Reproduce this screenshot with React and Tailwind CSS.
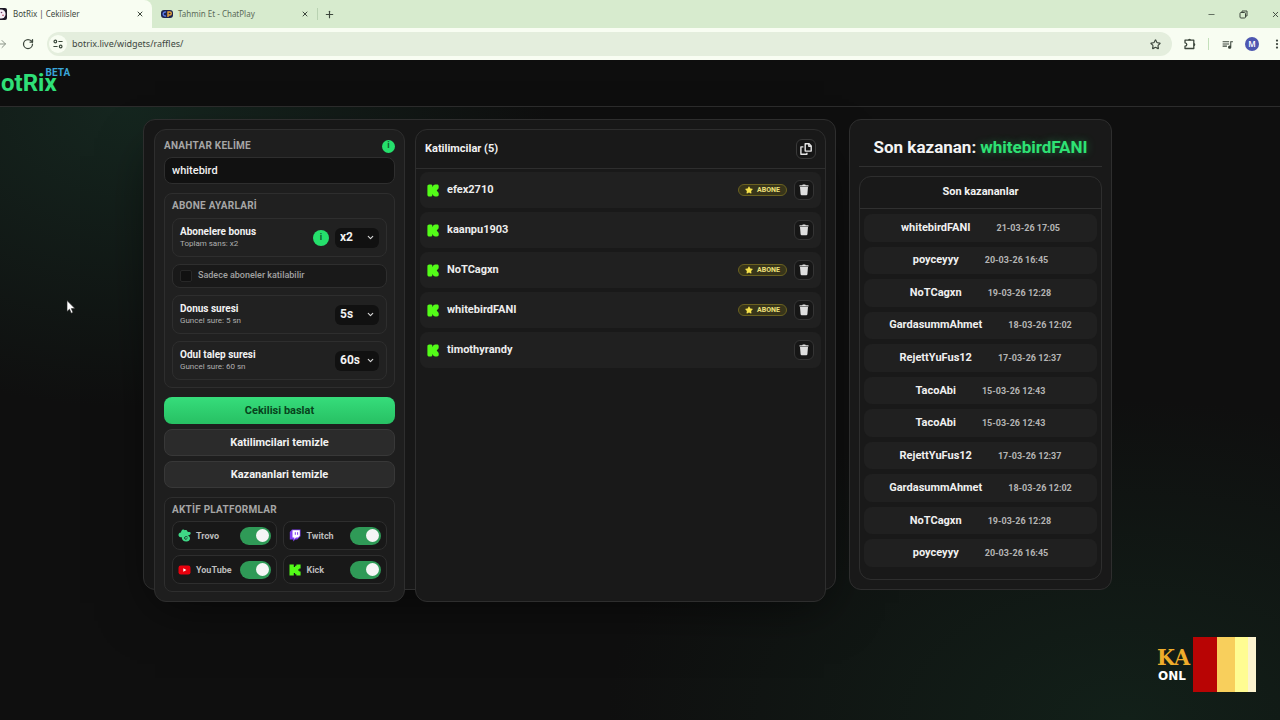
import { useState } from "react";
import { ChevronDown, Minus, X, Plus, RotateCw, ArrowRight, Star, MoreVertical } from "lucide-react";
import { FaStar } from "react-icons/fa";
import { MdQueueMusic } from "react-icons/md";

const participants = [
  { name: "efex2710", sub: true },
  { name: "kaanpu1903", sub: false },
  { name: "NoTCagxn", sub: true },
  { name: "whitebirdFANI", sub: true },
  { name: "timothyrandy", sub: false },
];

const winners = [
  ["whitebirdFANI", "21-03-26 17:05"],
  ["poyceyyy", "20-03-26 16:45"],
  ["NoTCagxn", "19-03-26 12:28"],
  ["GardasummAhmet", "18-03-26 12:02"],
  ["RejettYuFus12", "17-03-26 12:37"],
  ["TacoAbi", "15-03-26 12:43"],
  ["TacoAbi", "15-03-26 12:43"],
  ["RejettYuFus12", "17-03-26 12:37"],
  ["GardasummAhmet", "18-03-26 12:02"],
  ["NoTCagxn", "19-03-26 12:28"],
  ["poyceyyy", "20-03-26 16:45"],
];

const cardBorder = "border border-[#2e2e2e]";

function TabIconBotrix() {
  return (
    <svg viewBox="0 0 12 12" className="size-3 shrink-0" aria-hidden="true">
      <rect width="12" height="12" rx="2" fill="#1d1826" />
      <circle cx="6" cy="6" r="4.6" fill="#f4eef6" />
      <circle cx="6.5" cy="4.5" r="0.8" fill="#6b3a63" />
      <circle cx="8" cy="7.2" r="0.8" fill="#b23a55" />
    </svg>
  );
}

function TabIconChatPlay() {
  return (
    <svg viewBox="0 0 12 8" className="h-2 w-3 shrink-0" aria-hidden="true">
      <rect width="12" height="8" rx="3" fill="#1c2350" />
      <path d="M5 2.2A2 2 0 1 0 5 5.8" fill="none" stroke="#5b7be8" strokeWidth="1.4" />
      <path d="M7 7V2h1.8a1.5 1.5 0 0 1 0 3H7" fill="none" stroke="#e8a33b" strokeWidth="1.4" />
    </svg>
  );
}

function TuneIcon() {
  return (
    <svg viewBox="0 0 12 12" className="size-2.5" fill="none" stroke="#3c4a3c" strokeWidth="1.4" aria-hidden="true">
      <circle cx="2.8" cy="3" r="1.6" />
      <path d="M6.5 3h5M.5 9h5" />
      <circle cx="9.2" cy="9" r="1.6" />
    </svg>
  );
}

function PuzzleIcon() {
  return (
    <svg viewBox="0 0 14 14" className="size-3.5" aria-hidden="true">
      <path d="M2 3.2h8.8v8.3H2V9.2c1.1-.1 1.8-.8 1.800-1.700S3.100 5.900 2 5.800z" fill="none" stroke="#3c463c" strokeWidth="1.300" strokeLinejoin="round" />
      <path d="M5 3.300a1.500 1.500 0 0 1 3 0zM10.800 5.900a1.500 1.500 0 0 1 0 3z" fill="#3c463c" />
    </svg>
  );
}

function KickIcon({ className }) {
  return (
    <svg viewBox="0 0 12 12" className={className} aria-hidden="true">
      <path d="M.5.5h4.300v2.600h1.300V1.800h1.300V.5h4.200v3.900h-1.300v1.200H9v.8h1.300v1.200h1.300v3.900H7.400v-1.300H6.100V8.900H4.800v2.600H.5z" fill="#53fc18" />
    </svg>
  );
}

function KickSoftIcon() {
  return (
    <svg viewBox="0 0 12 13" className="h-3.25 w-3" aria-hidden="true">
      <path
        d="M2.300.5h1.500c1 0 1.600.6 1.600 1.500v.7h.4C6.200 1.300 7 .5 8.300.5H10c1.100 0 1.700.7 1.700 1.700v1.200c0 1.400-1.400 2-2 3.100.6 1.100 2 1.700 2 3.100v1.200c0 1-.6 1.700-1.700 1.700H8.300c-1.300 0-2.100-.8-2.500-2.200h-.4v.7c0 .9-.6 1.500-1.600 1.500H2.300C1.100 12.500.4 11.800.4 10.700V2.300C.4 1.200 1.100.5 2.300.5z"
        fill="#53fc18"
      />
    </svg>
  );
}

function TrovoIcon() {
  return (
    <svg viewBox="0 0 13 13" className="size-3.25 shrink-0" aria-hidden="true">
      <path
        d="M4.100 1.100c1-.8 2.100-.5 2.600.2.900-.6 2.300-.3 2.600.9.100.5.500.8 1.100.8h1.100c1.200 0 1.500 1 1 2-.5 1-1.600 1.500-2.800 1.400 1.600.6 2.500 1.700 2.300 3.200-.2 1.900-1.600 3-3.700 2.900-2.700-.1-4.400-1.600-4.700-4.600-.7.600-1.900.5-2.500-.3C.3 6.700.3 5.300 1.100 4.300c.5-.6 1.200-.8 1.900-.7.100-1 .4-1.900 1.100-2.500z"
        fill="#3fd886"
      />
      <path d="M9.600 8.200c-1.200-1.200-3.200-.6-3.100.9.100 1.400 2.300 1.600 2.500.3" fill="none" stroke="#17352a" strokeWidth="1" />
    </svg>
  );
}

function TwitchIcon() {
  return (
    <svg viewBox="0 0 12 13" className="h-3.25 w-3 shrink-0" aria-hidden="true">
      <path d="M3 .5h8.500v6.800L8.300 10.500H6.300L4.200 12.500V10.500H.8V3z" fill="#7d3cf0" />
      <path d="M3.500 1.200h7.300v5.600L9 8.600H7L5.300 10.300V8.600H3.500z" fill="#fff" />
      <path d="M6.300 3.200v2.600M8.600 3.200v2.600" stroke="#7d3cf0" strokeWidth="1" />
    </svg>
  );
}

function YouTubeIcon() {
  return (
    <svg viewBox="0 0 13 10" className="h-2.5 w-3.25 shrink-0" aria-hidden="true">
      <rect x=".5" y=".5" width="12" height="9" rx="2.300" fill="#e8000d" />
      <path d="M5.300 3.200v3.600L8.400 5z" fill="#fff" />
    </svg>
  );
}

function TrashIcon() {
  return (
    <svg viewBox="0 0 10 12" className="h-3 w-2.5" fill="#dedede" aria-hidden="true">
      <path d="M.5 1.300h2.700L3.800.5h2.400l.6.800h2.700v1.300h-9zM1 3.100h8l-.6 7.100c-.1.600-.5 1-1.100 1H2.700c-.6 0-1-.4-1.100-1z" />
    </svg>
  );
}

function CopyIcon() {
  return (
    <svg viewBox="0 0 12 12" className="size-3" fill="none" stroke="#e6e6e6" strokeWidth="1.400" strokeLinejoin="round" aria-hidden="true">
      <path d="M5.200.8h3.900l2.100 2.100v5.200h-6z" />
      <path d="M8.800.9v2.300h2.300M3.400 3.900H.9v7.300h6V9.800" />
    </svg>
  );
}

function SectionLabel({ children }) {
  return <h3 className="text-[10px] leading-3 font-bold tracking-wide text-[#a6a6a6]">{children}</h3>;
}

function Info({ label, className }) {
  return (
    <button type="button" aria-label={label} className={`flex shrink-0 items-center justify-center rounded-full bg-[#25e06c] font-bold text-[#0d5a2b] ${className}`}>
      i
    </button>
  );
}

function SelectBox({ id, value, options }) {
  return (
    <div className="flex shrink-0 items-center rounded-md bg-[#111111]">
      <select id={id} defaultValue={value} className="h-5 w-11 appearance-none bg-transparent pb-px pl-[5px] text-xs leading-[19px] font-bold text-[#f2f2f2]">
        {options.map((o) => (
          <option key={o}>{o}</option>
        ))}
      </select>
      <ChevronDown className="pointer-events-none -ml-[13px] mr-1 size-[9px] text-[#d8d8d8]" strokeWidth={3} />
    </div>
  );
}

function SettingRow({ id, title, hint, value, options, info }) {
  return (
    <div className={`flex h-[39px] items-center gap-1.5 rounded-lg bg-[#212121] px-[7px] ${cardBorder}`}>
      <div className="min-w-0 flex-1">
        <label htmlFor={id} className="block text-[10px] leading-[13px] font-bold text-[#f2f2f2]">{title}</label>
        <p className="text-[8px] leading-3 text-[#b0b0b0]">{hint}</p>
      </div>
      {info && <Info label="Bonus bilgisi" className="size-4 text-[9px]" />}
      <SelectBox id={id} value={value} options={options} />
    </div>
  );
}

function Platform({ icon, name }) {
  const [on, setOn] = useState(true);
  return (
    <label className={`flex h-[29px] items-center gap-[5px] rounded-lg bg-[#181818] px-[5px] ${cardBorder}`}>
      <span className="flex w-[13px] justify-center">{icon}</span>
      <span className="flex-1 text-[9px] leading-3 font-bold text-[#bcbcbc]">{name}</span>
      <input type="checkbox" checked={on} onChange={() => setOn(!on)} className="peer sr-only" />
      <span className="flex h-[18px] w-[31px] items-center rounded-full bg-[#555] px-0.5 peer-checked:justify-end peer-checked:bg-[#2f9a57]">
        <span className="size-[13px] rounded-full bg-[#f5f5f5]" />
      </span>
    </label>
  );
}

function Browser() {
  return (
    <header className="font-['Noto_Sans',sans-serif] text-[#3d473d]">
      <div className="flex h-7 bg-[#d7ebce]">
        <div className="flex w-[152px] items-center rounded-tr-lg bg-[#f8fdf2] pr-2">
          <div className="-ml-[5px] flex flex-1 items-center gap-1.5">
            <TabIconBotrix />
            <span className="text-[8px] leading-3">BotRix | Cekilisler</span>
          </div>
          <button type="button" aria-label="Sekmeyi kapat"><X className="size-2" strokeWidth={3} /></button>
        </div>
        <div className="my-2 flex w-[166px] items-center gap-[5px] border-r border-[#b9d2b2] pr-2 pl-[9px]">
          <TabIconChatPlay />
          <span className="flex-1 text-[8px] leading-3 text-[#5a6a58]">Tahmin Et - ChatPlay</span>
          <button type="button" aria-label="Sekmeyi kapat"><X className="size-2" strokeWidth={3} /></button>
        </div>
        <button type="button" aria-label="Yeni sekme" className="ml-1.5"><Plus className="size-[11px]" strokeWidth={2.5} /></button>
        <div className="ml-auto flex items-center gap-[23px]">
          <button type="button" aria-label="Simge durumuna küçült"><Minus className="size-[9px]" /></button>
          <button type="button" aria-label="Geri yükle">
            <svg viewBox="0 0 9 9" className="size-[9px]" fill="none" stroke="currentColor" aria-hidden="true">
              <rect x="1" y="2.500" width="5.500" height="5.500" rx="1" />
              <path d="M3 2.500V1h5v5H6.500" />
            </svg>
          </button>
          <button type="button" aria-label="Kapat"><X className="size-[9px]" strokeWidth={2.5} /></button>
        </div>
      </div>
      <div className="flex h-8 items-center bg-[#f8fdf2]">
        <button type="button" aria-label="İleri" className="-ml-1 text-[#8a9488]"><ArrowRight className="size-3" /></button>
        <button type="button" aria-label="Yenile" className="mr-[13px] ml-[14px]"><RotateCw className="size-3" strokeWidth={2.5} /></button>
        <div className="flex h-6 flex-1 items-center rounded-full bg-[#e4eedd] pr-[11px] pl-[2px]">
          <span className="flex size-[18px] items-center justify-center rounded-full bg-[#f8fdf2]"><TuneIcon /></span>
          <input aria-label="Adres" defaultValue="botrix.live/widgets/raffles/" className="ml-[5px] flex-1 bg-transparent text-[9px] leading-4 text-[#3d473d] outline-none" />
          <button type="button" aria-label="Yer işareti"><Star className="size-[11px]" strokeWidth={2.5} /></button>
        </div>
        <div className="-mr-[3px] flex items-center">
          <button type="button" aria-label="Uzantılar" className="ml-[11px]"><PuzzleIcon /></button>
          <span className="mr-3 ml-[11px] h-3 w-px bg-[#c4e0bb]" />
          <button type="button" aria-label="Medya"><MdQueueMusic className="size-[13px]" /></button>
          <button type="button" aria-label="Profil" className="ml-[11px] flex size-[14px] items-center justify-center rounded-full bg-[#4d57b0] text-[8px] font-semibold text-white">M</button>
          <button type="button" aria-label="Menü" className="ml-3"><MoreVertical className="size-3" strokeWidth={2.5} /></button>
        </div>
      </div>
    </header>
  );
}

function Controls() {
  return (
    <section className={`rounded-xl bg-[#1e1e1e] p-[9px] ${cardBorder}`}>
      <div className="mb-1 flex h-[14px] items-center justify-between">
        <label htmlFor="keyword" className="text-[10px] leading-3 font-bold tracking-wide text-[#a6a6a6]">ANAHTAR KELİME</label>
        <Info label="Anahtar kelime bilgisi" className="size-[13px] text-[9px]" />
      </div>
      <input id="keyword" defaultValue="whitebird" className={`h-[27px] w-full rounded-lg bg-[#111111] px-[7px] text-[11px] font-medium text-[#f2f2f2] ${cardBorder}`} />

      <div className={`mt-[9px] flex flex-col gap-[7px] rounded-lg bg-[#202020] px-[7px] pt-1.5 pb-[7px] ${cardBorder}`}>
        <div className="-mb-px"><SectionLabel>ABONE AYARLARİ</SectionLabel></div>
        <SettingRow id="bonus" title="Abonelere bonus" hint="Toplam sans: x2" value="x2" options={["x1", "x2", "x3"]} info />
        <label className={`flex h-6 items-center gap-1.5 rounded-lg bg-[#191919] px-[7px] text-[9px] font-medium text-[#a2a2a2] ${cardBorder}`}>
          <input type="checkbox" className="size-3 appearance-none rounded-xs border border-[#272727] bg-[#111111] checked:bg-[#25e06c]" />
          Sadece aboneler katilabilir
        </label>
        <SettingRow id="spin" title="Donus suresi" hint="Guncel sure: 5 sn" value="5s" options={["5s", "10s"]} />
        <SettingRow id="claim" title="Odul talep suresi" hint="Guncel sure: 60 sn" value="60s" options={["30s", "60s"]} />
      </div>

      <div className="mt-[9px] flex flex-col gap-[5px] text-[11px] leading-4 font-bold">
        <button type="button" className="h-[27px] rounded-lg bg-linear-to-b from-[#36dd7b] to-[#27c063] text-[#07431c]">Cekilisi baslat</button>
        <button type="button" className="h-[27px] rounded-lg border border-[#383838] bg-[#2b2b2b] text-[#f2f2f2]">Katilimcilari temizle</button>
        <button type="button" className="h-[27px] rounded-lg border border-[#383838] bg-[#2b2b2b] text-[#f2f2f2]">Kazananlari temizle</button>
      </div>

      <div className={`mt-[9px] rounded-lg bg-[#1c1c1c] px-[7px] pt-1.5 pb-[7px] ${cardBorder}`}>
        <SectionLabel>AKTİF PLATFORMLAR</SectionLabel>
        <div className="mt-[5px] grid grid-cols-2 gap-x-1.5 gap-y-[5px]">
          <Platform icon={<TrovoIcon />} name="Trovo" />
          <Platform icon={<TwitchIcon />} name="Twitch" />
          <Platform icon={<YouTubeIcon />} name="YouTube" />
          <Platform icon={<KickIcon className="size-3" />} name="Kick" />
        </div>
      </div>
    </section>
  );
}

function Participants() {
  return (
    <section className={`rounded-xl bg-[#191919] ${cardBorder}`}>
      <div className="flex h-[39px] items-center justify-between border-b border-[#2e2e2e] px-[9px]">
        <h2 className="text-[11px] font-bold text-[#f2f2f2]">Katilimcilar (5)</h2>
        <button type="button" aria-label="Kopyala" className="flex size-5 items-center justify-center rounded-md border border-[#3a3a3a] bg-[#161616]"><CopyIcon /></button>
      </div>
      <ul className="flex flex-col gap-1 px-1 pt-[3px]">
        {participants.map((p) => (
          <li key={p.name} className="flex h-9 items-center rounded-lg bg-[#202020] px-[7px]">
            <KickSoftIcon />
            <span className="ml-2 flex-1 text-[11px] leading-4 font-bold text-[#ededed]">{p.name}</span>
            {p.sub && (
              <span className="mr-[7px] flex h-3 w-[49px] items-center justify-center gap-1 rounded-full border border-[#6a6120] bg-[#38351a] text-[7px] leading-none font-bold text-[#eee07a]">
                <FaStar className="size-2 text-[#f4e14a]" />
                ABONE
              </span>
            )}
            <button type="button" aria-label={`Sil: ${p.name}`} className="flex size-5 items-center justify-center rounded-md border border-[#343434] bg-[#161616]"><TrashIcon /></button>
          </li>
        ))}
      </ul>
    </section>
  );
}

function Winners() {
  return (
    <aside className={`flex flex-col rounded-xl bg-[#191919] p-[9px] ${cardBorder}`}>
      <h2 className="flex h-[38px] items-center justify-center gap-1 border-b border-[#303030] text-[17px] font-bold text-[#f4f4f4]">
        Son kazanan: <span className="text-[#2ee274] [text-shadow:0_0_8px_#2ee27466]">whitebirdFANI</span>
      </h2>
      <section className={`mt-[9px] flex flex-1 flex-col rounded-xl ${cardBorder}`}>
        <h3 className="flex h-8 items-center justify-center border-b border-[#303030] text-[11px] font-bold text-[#f2f2f2]">Son kazananlar</h3>
        <ul className="flex flex-1 flex-col gap-[5px] px-1 pt-[5px] pb-3">
          {winners.map(([name, date], i) => (
            <li key={i} className="flex flex-1 items-center justify-center gap-[26px] rounded-lg bg-[#202020]">
              <span className="text-[11px] leading-4 font-bold text-[#f0f0f0]">{name}</span>
              <time className="text-[9px] leading-4 font-bold text-[#b4b4b4]">{date}</time>
            </li>
          ))}
        </ul>
      </section>
    </aside>
  );
}

function Watermark() {
  return (
    <div className="absolute right-6 bottom-7 flex h-[55px] items-stretch">
      <div className="flex w-9 flex-col pt-1.5">
        <span className="font-['DejaVu_Serif_Condensed','Liberation_Serif',serif] text-[23px] leading-7 font-bold text-[#efac2b]">KA</span>
        <span className="pl-px font-['DejaVu_Sans',sans-serif] text-xs leading-[10px] font-bold text-white">ONL</span>
      </div>
      <div className="w-6 bg-[#b80404]" />
      <div className="w-[18px] bg-[#f8cf5c]" />
      <div className="w-[13px] bg-[#fffc92]" />
      <div className="w-2 bg-[#fcf3cf]" />
    </div>
  );
}

export default function App() {
  return (
    <div className="relative flex min-h-screen flex-col overflow-hidden bg-[#0f0f0f] font-[Roboto,sans-serif]">
      <Browser />
      <div className="flex h-[47px] items-center border-b border-[#2c2c2c] bg-[#0e0e0e]">
        <a href="#home" className="flex items-start pl-px text-2xl leading-7 font-bold text-[#2fe078]">
          otRix
          <sup className="top-0 -mt-0.5 -ml-[11px] text-[10px] leading-3 font-bold text-[#3aa5d8]">BETA</sup>
        </a>
      </div>
      <main className="flex-1 bg-[radial-gradient(ellipse_420px_300px_at_10%_0%,#15261f,transparent),radial-gradient(ellipse_520px_320px_at_88%_100%,#122019,transparent)] pt-3 pr-[25px]">
        <div className="mx-auto grid max-w-[969px] grid-cols-[693fr_263fr] gap-[13px]">
          <div className={`rounded-xl bg-[#171717] pt-[9px] pr-[9px] pl-[10px] shadow-2xl shadow-black/60 ${cardBorder}`}>
            <div className="-mb-[13px] grid grid-cols-[251fr_411fr] gap-[10px]">
              <Controls />
              <Participants />
            </div>
          </div>
          <Winners />
        </div>
      </main>
      <svg viewBox="0 0 10 14" className="pointer-events-none absolute top-[300px] left-[66px] h-3.5 w-2.5" aria-hidden="true">
        <path d="M1 .5v11l2.500-2.300 1.700 4 1.800-.8-1.700-3.800H9z" fill="#fff" stroke="#222" strokeWidth=".6" />
      </svg>
      <Watermark />
    </div>
  );
}
